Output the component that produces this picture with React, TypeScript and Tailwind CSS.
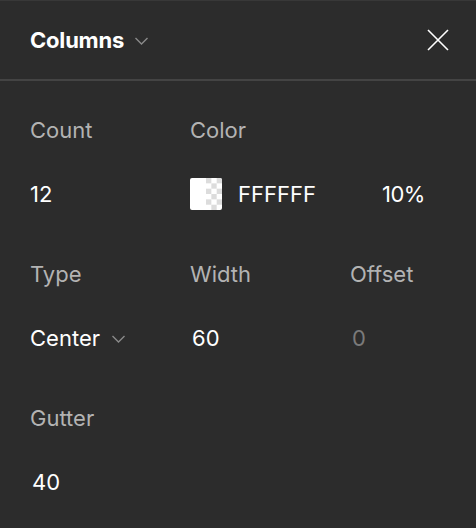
import React from "react";

function Chevron({ className }: { className?: string }) {
  return (
    <svg width="15" height="14" viewBox="0 0 15 14" fill="none" className={className}>
      <path d="M1.5 4 L7.5 10 L13.5 4" stroke="#8a8a8a" strokeWidth="1.4" />
    </svg>
  );
}

function Swatch() {
  const cells = [];
  for (let r = 0; r < 6; r++) {
    for (let c = 0; c < 3; c++) {
      if ((r + c) % 2 === 0) {
        cells.push(<rect key={`${r}-${c}`} x={16 + c * 5.34} y={r * 5.34} width="5.34" height="5.34" fill="#dcdcdc" />);
      }
    }
  }
  return (
    <svg width="32" height="32" viewBox="0 0 32 32" className="rounded-[2px]">
      <rect width="32" height="32" fill="#ffffff" />
      {cells}
    </svg>
  );
}

function Field({ label, children }: { label: string; children: React.ReactNode }) {
  return (
    <div className="flex flex-col">
      <div className="h-[32px] flex items-center text-[22px] text-[#b3b3b3]">{label}</div>
      <div className="h-[32px] mt-[32px] flex items-center text-[22px] text-white">{children}</div>
    </div>
  );
}

export default function App() {
  return (
    <div
      className="w-[476px] h-[528px] bg-[#2c2c2c] border-t border-[#383838] overflow-hidden"
      style={{ fontFamily: "Inter, 'Noto Sans', sans-serif" }}
    >
      <div className="h-[78px] flex items-center justify-between pl-[30px] pr-[27px]">
        <div className="flex items-center">
          <span className="text-[22px] font-bold text-white tracking-[-0.2px]">Columns</span>
          <Chevron className="ml-[10px] mt-[1px]" />
        </div>
        <svg width="22" height="22" viewBox="0 0 22 22" fill="none">
          <path d="M1 1 L21 21 M21 1 L1 21" stroke="#ffffff" strokeWidth="1.6" />
        </svg>
      </div>
      <div className="h-[2px] bg-[#444444]" />
      <div className="pl-[30px] pt-[33px] flex flex-col gap-[48px]">
        <div className="grid grid-cols-[160px_1fr]">
          <Field label="Count">12</Field>
          <Field label="Color">
            <div className="flex items-center">
              <Swatch />
              <span className="ml-[16px]">FFFFFF</span>
              <span className="ml-[66px] tracking-[-0.5px]">10%</span>
            </div>
          </Field>
        </div>
        <div className="grid grid-cols-[160px_160px_1fr]">
          <Field label="Type">
            <span>Center</span>
            <Chevron className="ml-[11px] mt-[1px]" />
          </Field>
          <Field label="Width">
            <span className="ml-[2px]">60</span>
          </Field>
          <Field label="Offset">
            <span className="ml-[2px] text-[#7a7a7a]">0</span>
          </Field>
        </div>
        <div className="grid grid-cols-[160px_1fr]">
          <Field label="Gutter">
            <span className="ml-[2px]">40</span>
          </Field>
        </div>
      </div>
    </div>
  );
}
